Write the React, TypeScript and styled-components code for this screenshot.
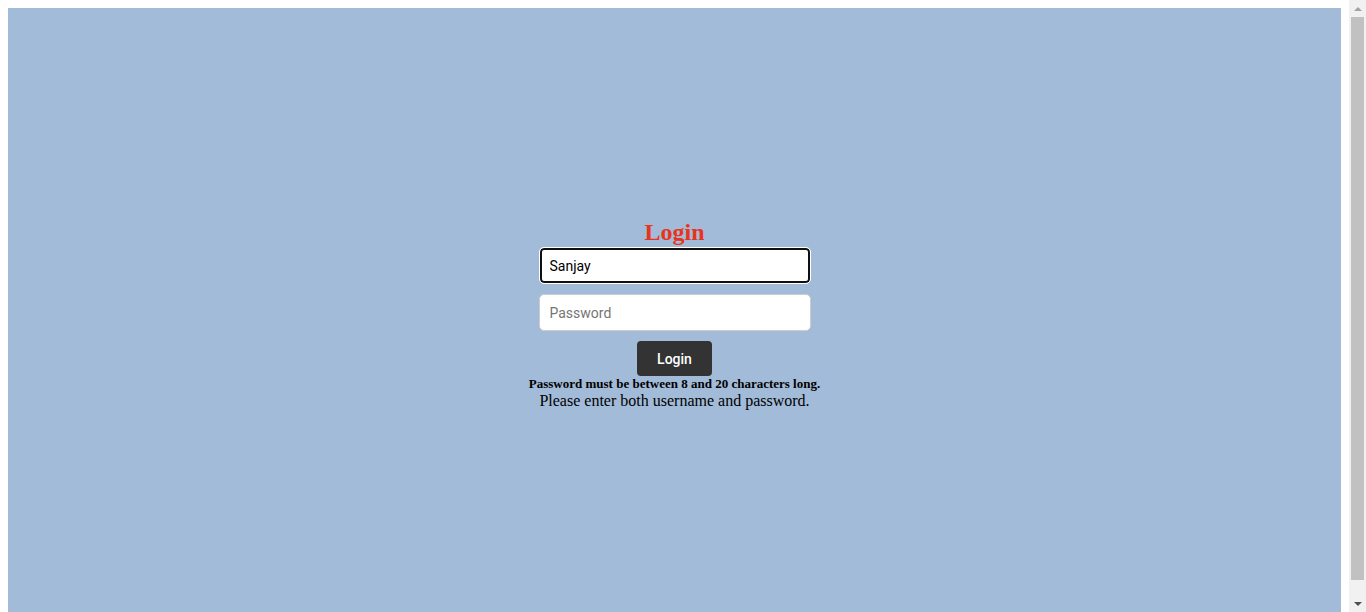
import React from "react";
import styled, { createGlobalStyle } from "styled-components";

const Global = createGlobalStyle`
  html, body { margin: 0; padding: 0; }
  body {
    margin: 8px 25px 8px 8px;
    font-family: "Liberation Serif", "Times New Roman", serif;
    background: #fff;
  }
`;

const Page = styled.div`
  min-height: 100vh;
  background: #a2bbd9;
  display: flex;
  flex-direction: column;
  align-items: center;
  justify-content: center;
`;

const Title = styled.h2`
  margin: 0 0 1px;
  font-family: "Liberation Serif", "Times New Roman", serif;
  font-size: 24px;
  font-weight: bold;
  color: #e8341c;
  line-height: 28px;
`;

const Form = styled.form`
  display: flex;
  flex-direction: column;
  align-items: center;
  gap: 10px;
`;

const Input = styled.input<{ $active?: boolean }>`
  box-sizing: border-box;
  width: 272px;
  height: 37px;
  padding: 0 10px;
  font-family: Roboto, "Liberation Sans", Arial, sans-serif;
  font-size: 14px;
  color: #000;
  background: #fff;
  border-radius: 5px;
  outline: none;
  border: 1px solid ${(p) => (p.$active ? "#fff" : "#ccc")};
  box-shadow: ${(p) => (p.$active ? "inset 0 0 0 2px #101010" : "none")};
  &::placeholder { color: #757575; }
`;

const Button = styled.button`
  box-sizing: border-box;
  height: 35px;
  padding: 0 20px;
  border: none;
  border-radius: 4px;
  background: #333;
  color: #fff;
  font-family: Roboto, "Liberation Sans", Arial, sans-serif;
  font-weight: 500;
  font-size: 14px;
  cursor: pointer;
`;

const Hint = styled.div`
  font-family: "Liberation Serif", "Times New Roman", serif;
  font-size: 13px;
  font-weight: bold;
  line-height: 16px;
  color: #000;
`;

const Message = styled.div`
  font-family: "Liberation Serif", "Times New Roman", serif;
  font-size: 16px;
  line-height: 18px;
  color: #000;
`;

const ScrollTrack = styled.div`
  position: fixed;
  top: 0;
  right: 0;
  width: 17px;
  height: 100vh;
  background: #f1f1f1;
  display: flex;
  flex-direction: column;
  align-items: center;
`;

const Arrow = styled.div<{ $down?: boolean; $dim?: boolean }>`
  width: 17px;
  height: 17px;
  display: flex;
  align-items: center;
  justify-content: center;
  &::after {
    content: "";
    width: 0;
    height: 0;
    border-left: 4px solid transparent;
    border-right: 4px solid transparent;
    ${(p) =>
      p.$down
        ? `border-top: 4px solid ${p.$dim ? "#a3a3a3" : "#505050"};`
        : `border-bottom: 4px solid ${p.$dim ? "#a3a3a3" : "#505050"};`}
  }
`;

const Thumb = styled.div`
  flex: 1;
  width: 13px;
  margin-bottom: 15px;
  background: #c1c1c1;
`;

export default function App() {
  return (
    <>
      <Global />
      <Page>
        <Title>Login</Title>
        <Form onSubmit={(e) => e.preventDefault()}>
          <Input $active defaultValue="Sanjay" autoFocus />
          <Input type="password" placeholder="Password" />
          <Button type="submit">Login</Button>
        </Form>
        <Hint>Password must be between 8 and 20 characters long.</Hint>
        <Message>Please enter both username and password.</Message>
      </Page>
      <ScrollTrack aria-hidden>
        <Arrow $dim />
        <Thumb />
        <Arrow $down />
      </ScrollTrack>
    </>
  );
}
